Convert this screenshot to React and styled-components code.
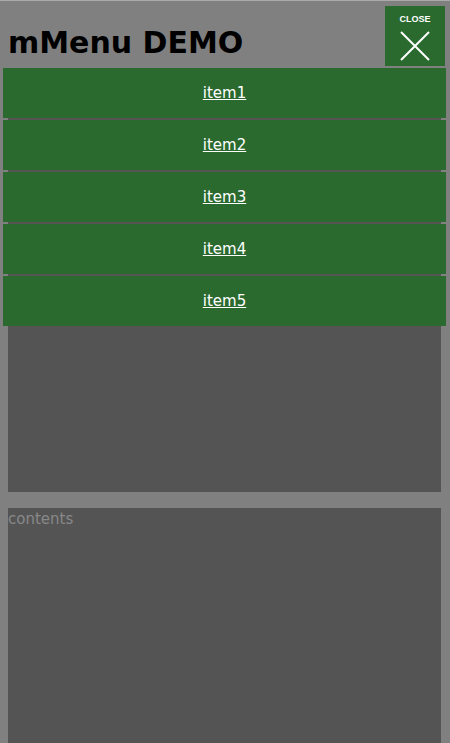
import React from "react";
import styled, { createGlobalStyle } from "styled-components";

const GlobalStyle = createGlobalStyle`
  html, body {
    margin: 0;
    padding: 0;
    background: #808080;
    font-family: "DejaVu Sans", Verdana, sans-serif;
    overflow: hidden;
  }
`;

const Page = styled.div`
  position: relative;
  height: 743px;
  border-top: 1px solid #aaaaaa;
  padding: 0 9px 0 8px;
  box-sizing: border-box;
  overflow: hidden;
`;

const Title = styled.h1`
  margin: 0;
  padding: 22px 0 6px;
  font-size: 30px;
  line-height: 39px;
  font-weight: bold;
  color: #000;
`;

const Box = styled.div`
  background: #545454;
  height: ${(p) => p.h}px;
  margin-bottom: 16px;
  color: #888888;
  font-size: 15px;
  line-height: 22px;
  &:last-of-type {
    margin-bottom: 0;
  }
`;

const CloseButton = styled.button`
  position: absolute;
  top: 5px;
  right: 5px;
  width: 60px;
  height: 60px;
  padding: 0;
  border: none;
  background: #2b6a2f;
  color: #fff;
  cursor: pointer;
  display: flex;
  flex-direction: column;
  align-items: center;
  .label {
    font-family: "Liberation Sans", Arial, sans-serif;
    font-size: 9px;
    font-weight: bold;
    margin-top: 8px;
    line-height: 10px;
  }
  svg {
    margin-top: 7px;
  }
`;

const Menu = styled.ul`
  position: absolute;
  top: 67px;
  left: 3px;
  right: 4px;
  margin: 0;
  padding: 0;
  list-style: none;
  display: flex;
  flex-direction: column;
  gap: 2px;
`;

const MenuItem = styled.li`
  height: 50px;
  background: #2b6a2f;
  display: flex;
  align-items: center;
  justify-content: center;
  a {
    color: #fff;
    font-family: "DejaVu Sans", Tahoma, sans-serif;
    font-size: 15px;
    text-decoration: underline;
  }
`;

const items = ["item1", "item2", "item3", "item4", "item5"];

export default function App() {
  return (
    <>
      <GlobalStyle />
      <Page>
        <Title>mMenu DEMO</Title>
        <Box h={424} />
        <Box h={240}>contents</Box>
        <CloseButton>
          <span className="label">CLOSE</span>
          <svg width="30" height="30" viewBox="0 0 30 30">
            <path d="M1 1 L29 29 M29 1 L1 29" stroke="#fff" strokeWidth="2" fill="none" />
          </svg>
        </CloseButton>
        <Menu>
          {items.map((it) => (
            <MenuItem key={it}>
              <a href="#">{it}</a>
            </MenuItem>
          ))}
        </Menu>
      </Page>
    </>
  );
}
